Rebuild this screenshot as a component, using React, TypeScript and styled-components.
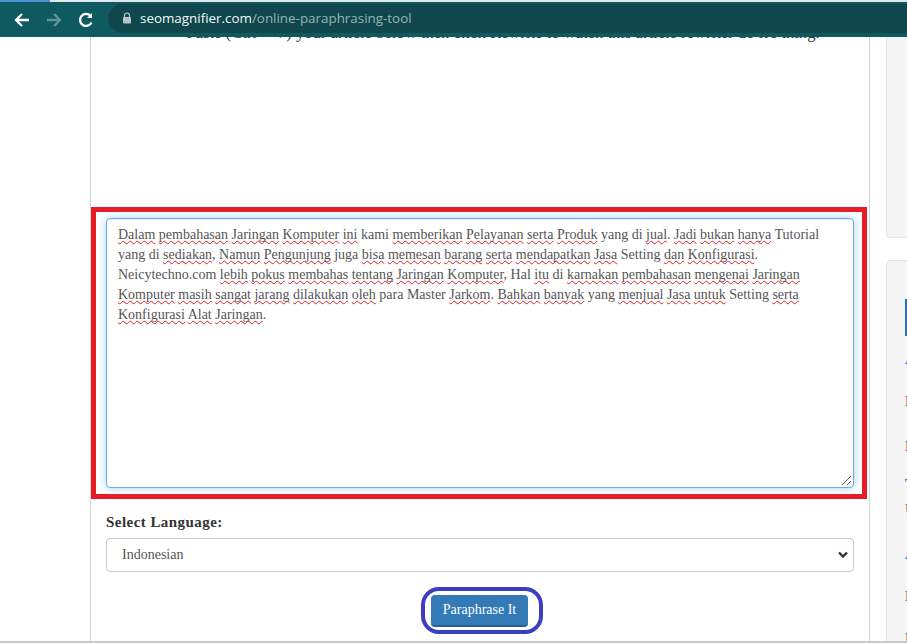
import React from "react";
import styled, { createGlobalStyle } from "styled-components";

const Global = createGlobalStyle`
  html, body { margin: 0; padding: 0; height: 100%; overflow: hidden; background: #fff; }
  * { box-sizing: border-box; }
`;

const Page = styled.div`
  width: 907px;
  height: 643px;
  display: flex;
  flex-direction: column;
  overflow: hidden;
  background: #fff;
  font-family: "Liberation Serif", serif;
`;

const TabEdge = styled.div`
  height: 2px;
  flex: none;
  background: linear-gradient(90deg, #4a90d9 0 50px, #dfe8e8 50px);
`;

const Toolbar = styled.header`
  height: 35px;
  flex: none;
  display: flex;
  align-items: center;
  gap: 0;
  padding: 0 0 0 13px;
  background: #0f5a60;
  position: relative;
  z-index: 2;
`;

const NavIcon = styled.svg<{ $dim?: boolean }>`
  width: 18px;
  height: 18px;
  flex: none;
  margin-right: 14px;
  fill: none;
  stroke: ${(p) => (p.$dim ? "#5f9498" : "#ffffff")};
  stroke-width: 2.3;
`;

const UrlBar = styled.div`
  flex: 1;
  height: 29px;
  margin: 0 0 3px -1px;
  display: flex;
  align-items: center;
  gap: 8px;
  padding-left: 14px;
  border-radius: 15px 0 0 15px;
  background: #0f474d;
  font-family: "Open Sans", "Noto Sans", sans-serif;
  font-size: 13.4px;
  color: #97b3b5;
`;

const Host = styled.span`
  color: #f2f7f7;
`;

const Body = styled.div`
  flex: 1;
  min-height: 0;
  display: flex;
  align-items: stretch;
  padding-left: 90px;
  overflow: hidden;
  border-bottom: 2px solid #c9c9c9;
`;

const Main = styled.main`
  width: 780px;
  flex: none;
  border-left: 1px solid #d4d4d4;
  border-right: 1px solid #d4d4d4;
  display: flex;
  flex-direction: column;
`;

const Intro = styled.p`
  margin: -14px 0 0;
  height: 184px;
  padding-left: 46px;
  text-align: center;
  font-size: 16.6px;
  line-height: 20px;
  color: #333;
  white-space: nowrap;
`;

const RedFrame = styled.div`
  height: 292px;
  margin-right: 2px;
  padding: 6px 8px 6px 10px;
  border: 5px solid #e81c26;
`;

const Editor = styled.div`
  position: relative;
  height: 270px;
  padding: 6px 11px;
  border: 1px solid #66afe9;
  border-radius: 4px;
  box-shadow: inset 0 1px 1px rgba(0, 0, 0, 0.075), 0 0 8px rgba(102, 175, 233, 0.6);
  background: #fff;
  font-size: 14px;
  line-height: 20px;
  color: #555;
`;

const Miss = styled.span`
  text-decoration: underline wavy #e0202a 1px;
  text-underline-offset: 1px;
  text-decoration-skip-ink: none;
`;

const Grip = styled.svg`
  position: absolute;
  right: 1px;
  bottom: 1px;
  width: 11px;
  height: 11px;
  stroke: #666;
  stroke-width: 1;
`;

const Form = styled.div`
  display: flex;
  flex-direction: column;
  padding: 14px 15px 0 15px;
`;

const Label = styled.label`
  font-size: 15px;
  font-weight: bold;
  line-height: 18px;
  letter-spacing: 0.45px;
  color: #333;
`;

const SelectBox = styled.div`
  height: 34px;
  margin-top: 7px;
  display: flex;
  align-items: center;
  justify-content: space-between;
  padding: 0 5px 0 15px;
  border: 1px solid #ccc;
  border-radius: 4px;
  font-size: 14px;
  color: #555;
  background: #fff;
`;

const Chevron = styled.svg`
  width: 10px;
  height: 8px;
  fill: none;
  stroke: #333;
  stroke-width: 2.4;
`;

const Actions = styled.div`
  margin-top: 15px;
  display: flex;
  justify-content: center;
`;

const Ring = styled.div`
  width: 122px;
  height: 47px;
  margin-left: 3px;
  display: flex;
  align-items: center;
  justify-content: center;
  border: 4px solid #3b3fbd;
  border-radius: 18px;
`;

const Button = styled.button`
  width: 97px;
  height: 32px;
  margin-left: -4px;
  padding: 0;
  border: 0;
  border-bottom: 2px solid #285e8e;
  border-radius: 4px;
  background: #337ab7;
  color: #fff;
  font-family: "Liberation Serif", serif;
  font-size: 14px;
`;

const Side = styled.aside`
  flex: 1;
  margin-left: 16px;
  margin-top: -2px;
  display: flex;
  flex-direction: column;
  gap: 22px;
`;

const Card = styled.div<{ $height: number }>`
  flex: none;
  height: ${(p) => p.$height}px;
  width: 60px;
  border: 1px solid #e3e3e3;
  border-radius: 4px;
  background: #f5f5f5;
  padding-left: 18px;
  overflow: hidden;
`;

const SideBanner = styled.div`
  width: 40px;
  height: 37px;
  margin-top: 38px;
  background: #2f6fa8;
`;

const SideLinks = styled.ul`
  margin: 13px 0 0;
  padding: 0;
  list-style: none;
  font-family: "Liberation Serif", serif;
  font-size: 15px;
  font-weight: bold;
  line-height: 20px;
`;

const SideLink = styled.li<{ $gap: number; $accent?: boolean }>`
  margin-top: ${(p) => p.$gap}px;
  color: ${(p) => (p.$accent ? "#337ab7" : "#55598f")};
`;

const sidebarLinks: [string, number, boolean][] = [
  ["Article", 0, true],
  ["Plagiarism", 22, false],
  ["Paraphrase", 25, false],
  ["Text", 18, false],
  ["Url", 5, false],
  ["Article", 25, true],
  ["Plagiarism", 22, false],
  ["Paraphrase", 22, false],
];

const words = (text: string) =>
  text.split(/(\[[^\]]+\])/).map((part, i) =>
    part.startsWith("[") ? <Miss key={i}>{part.slice(1, -1)}</Miss> : <React.Fragment key={i}>{part}</React.Fragment>
  );

export default function App() {
  return (
    <Page>
      <Global />
      <TabEdge />
      <Toolbar>
        <NavIcon viewBox="0 0 18 18">
          <path d="M16 9H3M9 3 3 9l6 6" />
        </NavIcon>
        <NavIcon viewBox="0 0 18 18" $dim>
          <path d="M2 9h13M9 3l6 6-6 6" />
        </NavIcon>
        <NavIcon viewBox="0 0 18 18">
          <path d="M14.5 11.5A6 6 0 1 1 13.6 5" />
          <path d="M15 2v5h-5" fill="#fff" stroke="none" />
        </NavIcon>
        <UrlBar>
          <svg width="10" height="12" viewBox="0 0 10 12">
            <path d="M2.5 5V3.5a2.5 2.5 0 0 1 5 0V5" fill="none" stroke="#b3c6c7" strokeWidth="1.2" />
            <rect x="1" y="5" width="8" height="6.5" rx="1" fill="#b3c6c7" />
          </svg>
          <span>
            <Host>seomagnifier.com</Host>/online-paraphrasing-tool
          </span>
        </UrlBar>
      </Toolbar>
      <Body>
        <Main>
          <Intro>Paste (Ctrl + V) your article below then click Rewrite to watch this article rewriter do it's thing.</Intro>
          <RedFrame>
            <Editor>
              {words(
                "[Dalam] [pembahasan] [Jaringan] [Komputer] [ini] kami [memberikan] [Pelayanan] [serta] [Produk] yang di [jual]. [Jadi] [bukan] [hanya] Tutorial yang di [sediakan], [Namun] [Pengunjung] juga [bisa] [memesan] [barang] [serta] [mendapatkan] [Jasa] Setting [dan] [Konfigurasi]. Neicytechno.com [lebih] [pokus] [membahas] [tentang] [Jaringan] [Komputer], Hal [itu] di [karnakan] [pembahasan] [mengenai] [Jaringan] [Komputer] [masih] [sangat] [jarang] [dilakukan] [oleh] para Master [Jarkom]. [Bahkan] [banyak] yang [menjual] [Jasa] [untuk] Setting [serta] [Konfigurasi] [Alat] [Jaringan]."
              )}
              <Grip viewBox="0 0 11 11">
                <path d="M1 10 10 1M6 10l4-4" />
              </Grip>
            </Editor>
          </RedFrame>
          <Form>
            <Label>Select Language:</Label>
            <SelectBox>
              Indonesian
              <Chevron viewBox="0 0 10 8">
                <path d="M1 1.5 5 5.5 9 1.5" />
              </Chevron>
            </SelectBox>
            <Actions>
              <Ring>
                <Button>Paraphrase It</Button>
              </Ring>
            </Actions>
          </Form>
        </Main>
        <Side>
          <Card $height={203} />
          <Card $height={400}>
            <SideBanner />
            <SideLinks>
              {sidebarLinks.map(([label, gap, accent], i) => (
                <SideLink key={i} $gap={gap} $accent={accent}>
                  {label}
                </SideLink>
              ))}
            </SideLinks>
          </Card>
        </Side>
      </Body>
    </Page>
  );
}
